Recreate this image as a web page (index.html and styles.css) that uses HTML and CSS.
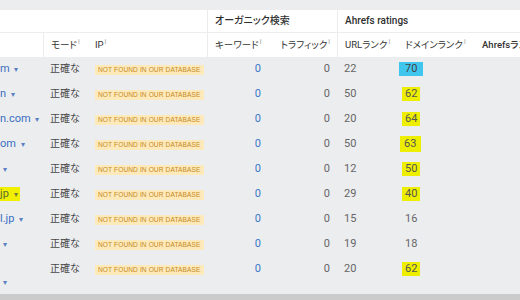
FILE: index.html
```html
<!DOCTYPE html>
<html lang="ja">
<head>
<meta charset="utf-8">
<link rel="stylesheet" href="styles.css">
</head>
<body>
<div class="topband"></div>
<table class="grid">
  <colgroup>
    <col class="c1"><col class="c2"><col class="c3"><col class="c4"><col class="c5"><col class="c6"><col class="c7"><col class="c8">
  </colgroup>
  <thead>
    <tr class="h1">
      <th colspan="3"></th>
      <th colspan="2" class="sep">オーガニック検索</th>
      <th colspan="3" class="sep">Ahrefs ratings</th>
    </tr>
    <tr class="h2">
      <th></th>
      <th class="sep">モード<sup>i</sup></th>
      <th>IP<sup>i</sup></th>
      <th class="sep">キーワード<sup>i</sup></th>
      <th class="r">トラフィック<sup>i</sup></th>
      <th class="sep">URLランク<sup>i</sup></th>
      <th>ドメインランク<sup>i</sup></th>
      <th class="clip">Ahrefsランク<sup>i</sup></th>
    </tr>
  </thead>
  <tbody>
    <tr>
      <td class="dom">m <span class="tri">▾</span></td><td class="jp">正確な</td><td><span class="badge">NOT FOUND IN OUR DATABASE</span></td><td class="num r blue">0</td><td class="num r">0</td><td class="num">22</td><td class="num"><span class="hl blue-hl">70</span></td><td></td>
    </tr>
    <tr>
      <td class="dom">n <span class="tri">▾</span></td><td class="jp">正確な</td><td><span class="badge">NOT FOUND IN OUR DATABASE</span></td><td class="num r blue">0</td><td class="num r">0</td><td class="num">50</td><td class="num"><span class="hl">62</span></td><td></td>
    </tr>
    <tr>
      <td class="dom">n.com <span class="tri">▾</span></td><td class="jp">正確な</td><td><span class="badge">NOT FOUND IN OUR DATABASE</span></td><td class="num r blue">0</td><td class="num r">0</td><td class="num">20</td><td class="num"><span class="hl">64</span></td><td></td>
    </tr>
    <tr>
      <td class="dom">om <span class="tri">▾</span></td><td class="jp">正確な</td><td><span class="badge">NOT FOUND IN OUR DATABASE</span></td><td class="num r blue">0</td><td class="num r">0</td><td class="num">50</td><td class="num"><span class="hl wide">63</span></td><td></td>
    </tr>
    <tr>
      <td class="dom"><span class="tri solo">▾</span></td><td class="jp">正確な</td><td><span class="badge">NOT FOUND IN OUR DATABASE</span></td><td class="num r blue">0</td><td class="num r">0</td><td class="num">12</td><td class="num"><span class="hl">50</span></td><td></td>
    </tr>
    <tr>
      <td class="dom"><span class="dom-hl">jp <span class="tri">▾</span></span></td><td class="jp">正確な</td><td><span class="badge">NOT FOUND IN OUR DATABASE</span></td><td class="num r blue">0</td><td class="num r">0</td><td class="num">29</td><td class="num"><span class="hl">40</span></td><td></td>
    </tr>
    <tr>
      <td class="dom">l.jp <span class="tri">▾</span></td><td class="jp">正確な</td><td><span class="badge">NOT FOUND IN OUR DATABASE</span></td><td class="num r blue">0</td><td class="num r">0</td><td class="num">15</td><td class="num">16</td><td></td>
    </tr>
    <tr>
      <td class="dom"><span class="tri solo">▾</span></td><td class="jp">正確な</td><td><span class="badge">NOT FOUND IN OUR DATABASE</span></td><td class="num r blue">0</td><td class="num r">0</td><td class="num">19</td><td class="num">18</td><td></td>
    </tr>
    <tr class="last">
      <td class="dom"><span class="blank">&nbsp;</span><span class="tri solo second">▾</span></td><td class="jp">正確な</td><td><span class="badge">NOT FOUND IN OUR DATABASE</span></td><td class="num r blue">0</td><td class="num r">0</td><td class="num">20</td><td class="num"><span class="hl">62</span></td><td></td>
    </tr>
  </tbody>
</table>
<div class="bottombar"></div>
</body>
</html>
```
FILE: styles.css
```css
html, body {
  margin: 0;
  padding: 0;
  background: #ecedef;
  overflow: hidden;
}
body {
  width: 520px;
  height: 300px;
  font-family: Roboto, "Noto Sans CJK JP", sans-serif;
  color: #444;
}
.topband {
  height: 10px;
  background: #ecedef;
}
.grid {
  width: 520px;
  table-layout: fixed;
  border-collapse: separate;
  border-spacing: 0;
}
.c1 { width: 43px; }
.c2 { width: 45px; }
.c3 { width: 119px; }
.c4 { width: 61px; }
.c5 { width: 69px; }
.c6 { width: 61px; }
.c7 { width: 77px; }
.c8 { width: 45px; }

th {
  background: #fff;
  text-align: left;
  font-weight: 400;
  color: #333;
  font-size: 9.5px;
  line-height: 12px;
  white-space: nowrap;
  overflow: hidden;
  padding: 0 7px;
  vertical-align: top;
  font-feature-settings: "palt";
}
.h1 {
  height: 23px;
}
.h2 {
  height: 24px;
}
.h1 th {
  padding-top: 5px;
  padding-bottom: 0;
  border-bottom: 1px solid #ededed;
  font-weight: 500;
  font-size: 10px;
  color: #2f2f2f;
}
.h2 th {
  padding-top: 6px;
  padding-bottom: 0;
}
th.sep {
  border-left: 1px solid #ececec;
}
th.r, td.r {
  text-align: right;
}
th.clip {
  text-overflow: clip;
  font-weight: 500;
}
sup {
  font-size: 7px;
  color: #9a9a9a;
  vertical-align: 4px;
  line-height: 0;
  margin-left: 1px;
}

tbody tr {
  height: 25px;
}
tbody tr.last {
  height: 37px;
}
td {
  padding: 6px 7px 0;
  line-height: 12px;
  vertical-align: top;
  font-size: 11px;
  white-space: nowrap;
  overflow: hidden;
}
td.dom {
  padding-left: 0;
  padding-right: 0;
  color: #3a6fc2;
  font-size: 11px;
}
.blank {
  display: block;
  height: 13px;
}
.tri {
  font-size: 8px;
  color: #5b7fc4;
  margin-left: 2px;
}
.tri.solo {
  margin-left: 3px;
}
.dom-hl {
  display: inline-block;
  background: #f0f000;
  color: #5a6a3a;
  padding: 0 2px 0 0;
  line-height: 13px;
  margin-top: -1px;
}
.dom-hl .tri {
  color: #7a7a3a;
}
td.jp {
  color: #474747;
  font-size: 10px;
}
.badge {
  display: inline-block;
  background: #fde9b9;
  color: #c68a25;
  font-family: "Liberation Sans", Arial, sans-serif;
  font-size: 6.6px;
  line-height: 10px;
  padding: 0 3px;
  letter-spacing: 0.1px;
  vertical-align: top;
  margin-top: 2px;
}
.num {
  color: #666;
  font-size: 11px;
}
.blue {
  color: #3a78c9;
}
.hl {
  display: inline-block;
  background: #eeee00;
  color: #555;
  padding: 0 3px;
  margin-left: -3px;
  line-height: 14px;
  vertical-align: top;
  margin-top: -1px;
}
.hl.wide {
  padding: 1px 5px 1px 4px;
  margin-left: -5px;
  margin-top: -2px;
}
.blue-hl {
  background: #3ec6ef;
  padding: 0 6px;
  margin-left: -6px;
  color: #444;
}
.bottombar {
  height: 6px;
  background: #cbcbcb;
}
```
